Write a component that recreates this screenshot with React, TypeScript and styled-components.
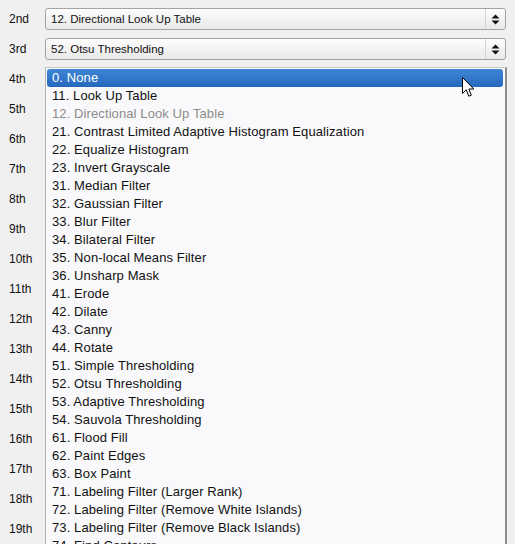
import styled, { createGlobalStyle } from "styled-components";

const GlobalStyle = createGlobalStyle`
  html, body {
    margin: 0;
    padding: 0;
    background: #f0f0f0;
    overflow: hidden;
  }
`;

const filters = [
  { label: "0. None" },
  { label: "11. Look Up Table" },
  { label: "12. Directional Look Up Table", disabled: true },
  { label: "21. Contrast Limited Adaptive Histogram Equalization" },
  { label: "22. Equalize Histogram" },
  { label: "23. Invert Grayscale" },
  { label: "31. Median Filter" },
  { label: "32. Gaussian Filter" },
  { label: "33. Blur Filter" },
  { label: "34. Bilateral Filter" },
  { label: "35. Non-local Means Filter" },
  { label: "36. Unsharp Mask" },
  { label: "41. Erode" },
  { label: "42. Dilate" },
  { label: "43. Canny" },
  { label: "44. Rotate" },
  { label: "51. Simple Thresholding" },
  { label: "52. Otsu Thresholding" },
  { label: "53. Adaptive Thresholding" },
  { label: "54. Sauvola Thresholding" },
  { label: "61. Flood Fill" },
  { label: "62. Paint Edges" },
  { label: "63. Box Paint" },
  { label: "71. Labeling Filter (Larger Rank)" },
  { label: "72. Labeling Filter (Remove White Islands)" },
  { label: "73. Labeling Filter (Remove Black Islands)" },
  { label: "74. Find Contours" },
];

// rows from 4th down sit under the open list, so their value is not shown
const steps = [
  { name: "2nd", value: "12. Directional Look Up Table" },
  { name: "3rd", value: "52. Otsu Thresholding" },
  { name: "4th", value: "" },
  { name: "5th", value: "" },
  { name: "6th", value: "" },
  { name: "7th", value: "" },
  { name: "8th", value: "" },
  { name: "9th", value: "" },
  { name: "10th", value: "" },
  { name: "11th", value: "" },
  { name: "12th", value: "" },
  { name: "13th", value: "" },
  { name: "14th", value: "" },
  { name: "15th", value: "" },
  { name: "16th", value: "" },
  { name: "17th", value: "" },
  { name: "18th", value: "" },
  { name: "19th", value: "" },
];

function SpinArrows() {
  return (
    <svg width="9" height="11" viewBox="0 0 9 11">
      <path d="M4.5 0.5 L8.5 4.5 L0.5 4.5 Z" fill="#111" />
      <path d="M0.5 6.5 L8.5 6.5 L4.5 10.5 Z" fill="#111" />
    </svg>
  );
}

function Cursor() {
  return (
    <svg width="13" height="21" viewBox="0 0 13 21">
      <path
        d="M0.5 0.5 L0.5 16.5 L4.3 12.8 L6.8 19.2 L9.3 18.2 L6.8 12 L11.8 12 Z"
        fill="#fff"
        stroke="#000"
        strokeWidth="1"
        strokeLinejoin="round"
      />
    </svg>
  );
}

export default function App() {
  return (
    <Page>
      <GlobalStyle />
      <Form>
        {steps.map((s) => (
          <Row key={s.name}>
            <StepLabel>{s.name}</StepLabel>
            <Select>
              <SelectText>{s.value}</SelectText>
              <ArrowBox>
                <SpinArrows />
              </ArrowBox>
            </Select>
          </Row>
        ))}
      </Form>
      <DropList>
        {filters.map((f, i) => (
          <Option key={f.label} $selected={i === 0} $disabled={!!f.disabled}>
            {f.label}
          </Option>
        ))}
      </DropList>
      <CursorWrap>
        <Cursor />
      </CursorWrap>
    </Page>
  );
}

const Page = styled.div`
  position: relative;
  width: 515px;
  height: 544px;
  overflow: hidden;
  background: #f0f0f0;
  font-family: "Liberation Sans", Arial, sans-serif;
`;

const Form = styled.div`
  display: flex;
  flex-direction: column;
  gap: 8px;
  padding: 8px 9px 0 9px;
`;

const Row = styled.div`
  display: flex;
  align-items: center;
  height: 22px;
`;

const StepLabel = styled.div`
  width: 36px;
  font-size: 12px;
  color: #111;
`;

const Select = styled.div`
  display: flex;
  align-items: center;
  width: 461px;
  height: 22px;
  box-sizing: border-box;
  border: 1px solid #a3a3a3;
  border-radius: 3px;
  background: linear-gradient(#fdfdfd, #e9e9e9);
`;

const SelectText = styled.div`
  flex: 1;
  padding-left: 5px;
  font-size: 11.5px;
  color: #111;
  white-space: nowrap;
`;

const ArrowBox = styled.div`
  display: flex;
  align-items: center;
  justify-content: center;
  width: 19px;
  height: 100%;
  border-left: 1px solid #d4d4d4;
`;

const DropList = styled.div`
  position: absolute;
  left: 45px;
  top: 67px;
  width: 462px;
  height: 500px;
  box-sizing: border-box;
  padding: 1px 2px 0 1px;
  background: #f9f9fb;
  border-top: 1px solid #c8c8c8;
  border-left: 1px solid #b4b4b4;
  border-right: 2px solid #8e8e8e;
`;

const Option = styled.div<{ $selected: boolean; $disabled: boolean }>`
  height: 18px;
  line-height: 18px;
  padding-left: 5px;
  font-size: 13px;
  letter-spacing: 0.1px;
  white-space: nowrap;
  border-radius: ${(p) => (p.$selected ? "3px" : "0")};
  color: ${(p) => (p.$selected ? "#fff" : p.$disabled ? "#8c8c8c" : "#111")};
  background: ${(p) =>
    p.$selected ? "linear-gradient(#3f86d6, #2569bd)" : "transparent"};
`;

const CursorWrap = styled.div`
  position: absolute;
  left: 462px;
  top: 77px;
  line-height: 0;
`;
